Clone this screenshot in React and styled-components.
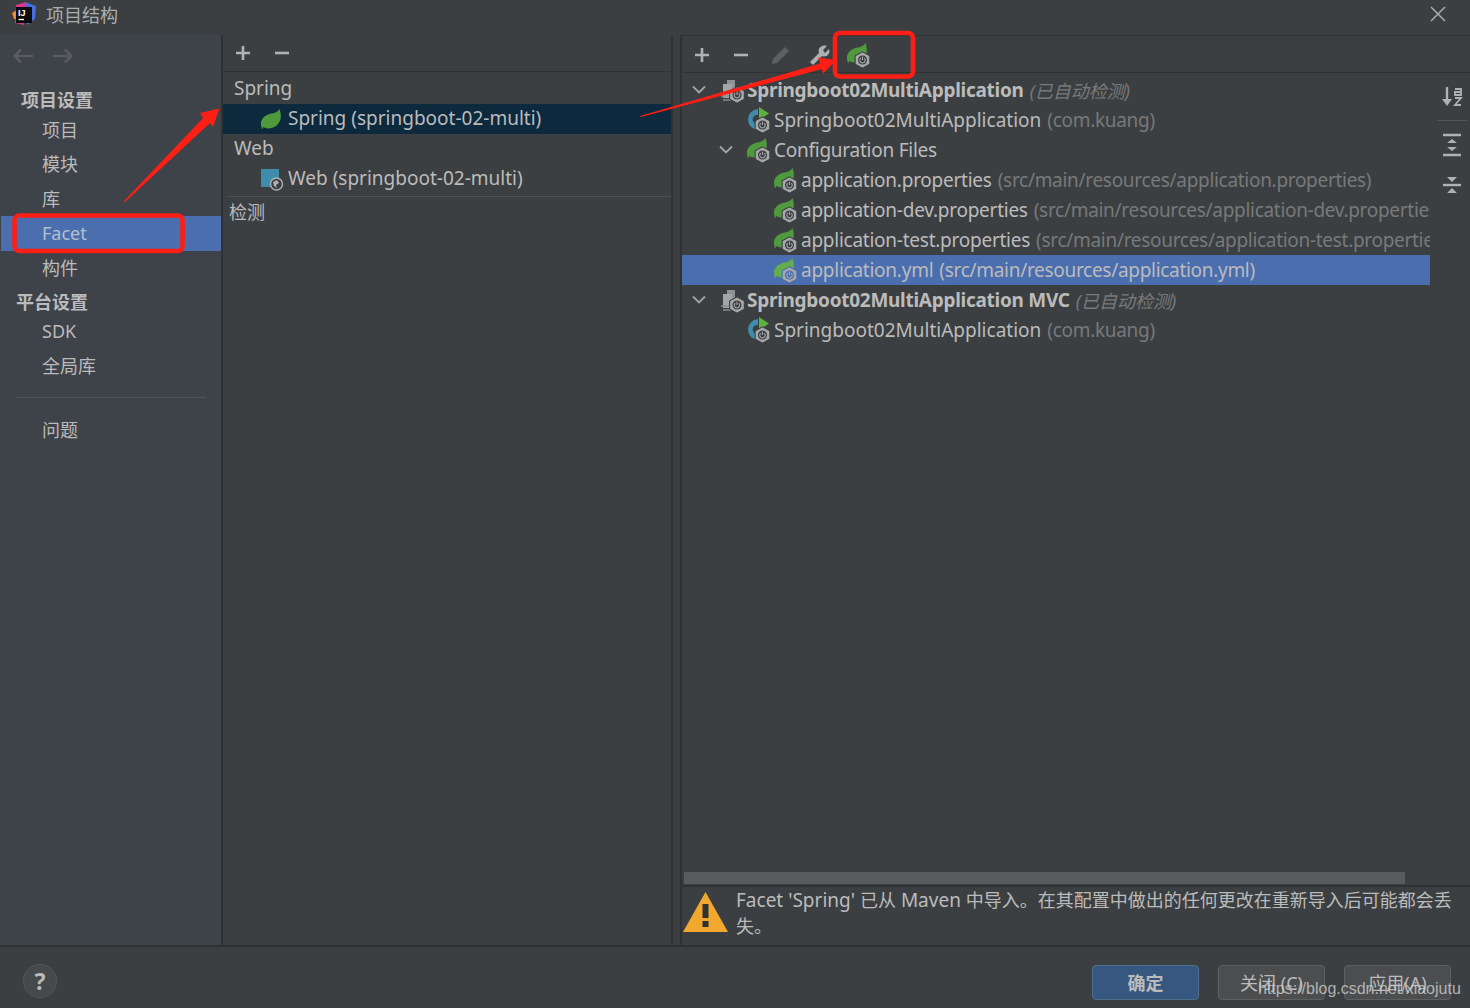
import React from "react";
import styled, { createGlobalStyle } from "styled-components";

const Global = createGlobalStyle`
  html, body { margin: 0; padding: 0; background: #3c3f41; }
  * { box-sizing: border-box; }
`;

const Window = styled.div`
  position: relative;
  width: 1470px;
  height: 1008px;
  overflow: hidden;
  display: flex;
  flex-direction: column;
  background: #3c3f41;
  color: #bbbbbb;
  font-family: "Noto Sans", "Noto Sans CJK SC", sans-serif;
  font-size: 19px;
`;
const TitleBar = styled.div`
  height: 35px;
  flex: none;
  display: flex;
  align-items: center;
  padding: 0 24px 8px 11px;
  gap: 9px;
  font-size: 18px;
  color: #a9adb0;
`;
const TitleText = styled.span`
  flex: 1;
`;
const Body = styled.div`
  flex: 1;
  min-height: 0;
  display: flex;
`;
const Sidebar = styled.nav`
  width: 221px;
  flex: none;
  padding-left: 1px;
  background: #3e4249;
  display: flex;
  flex-direction: column;
`;
const NavBar = styled.div`
  height: 42px;
  display: flex;
  align-items: center;
  gap: 18px;
  padding-left: 11px;
`;
const SideHead = styled.div`
  height: ${p => p.$h}px;
  margin-top: ${p => p.$mt || 0}px;
  padding-left: ${p => p.$x}px;
  padding-top: 2px;
  display: flex;
  align-items: center;
  font-weight: 700;
  font-size: 18px;
  color: #bbbbbb;
`;
const SideItem = styled.div`
  height: 34.5px;
  padding-left: 41px;
  padding-bottom: ${p => (p.$latin ? 0 : 2)}px;
  display: flex;
  align-items: center;
  font-size: 18px;
  color: ${p => (p.$active ? "#b4bfd0" : "#bbbbbb")};
  background: ${p => (p.$active ? "#4b6eaf" : "transparent")};
`;
const SideRule = styled.div`
  height: 1px;
  margin: 14px 15px 15px 14px;
  background: #50535a;
`;
const Splitter = styled.div`
  width: 2px;
  flex: none;
  background: #2f3132;
`;
const MidPanel = styled.section`
  width: 448px;
  flex: none;
  display: flex;
  flex-direction: column;
`;
const Toolbar = styled.div`
  height: ${p => p.$h}px;
  flex: none;
  display: flex;
  align-items: center;
  gap: 23px;
  padding-left: ${p => p.$x}px;
  padding-top: ${p => p.$pt || 0}px;
  border-bottom: 1px solid #323232;
`;
const MidList = styled.div`
  padding-top: 2px;
  display: flex;
  flex-direction: column;
`;
const MidRow = styled.div`
  height: 30px;
  display: flex;
  align-items: center;
  gap: 4px;
  padding-left: ${p => p.$x}px;
  padding-bottom: 2px;
  background: ${p => (p.$selected ? "#0d293e" : "transparent")};
`;
const MidIcon = styled.svg`
  flex: none;
  margin-top: 2px;
`;
const MidRule = styled.div`
  height: 1px;
  margin: 2px 0 0 5px;
  background: #515151;
`;
const InspectRow = styled.div`
  height: 30px;
  padding: 0 0 2px 6px;
  display: flex;
  align-items: center;
  font-size: 18px;
`;
const Gap = styled.div`
  width: 9px;
  flex: none;
  border-left: 2px solid #2f3132;
  background: #3c3f41;
`;
const RightPanel = styled.section`
  flex: 1;
  min-width: 0;
  display: flex;
  flex-direction: column;
  border-left: 2px solid #2f3132;
`;
const RightTop = styled.div`
  border-top: 1px solid #323232;
  flex: none;
`;
const TreeArea = styled.div`
  flex: 1;
  min-height: 0;
  display: flex;
  flex-direction: column;
  border-bottom: 2px solid #2f3132;
`;
const TreeMain = styled.div`
  flex: 1;
  min-height: 0;
  display: flex;
`;
const Tree = styled.div`
  width: 748px;
  flex: none;
  overflow: hidden;
  padding-top: 2px;
`;
const TreeRow = styled.div`
  height: 30px;
  display: flex;
  align-items: center;
  white-space: nowrap;
  padding-left: ${p => p.$x}px;
  background: ${p => (p.$selected ? "#4b6eaf" : "transparent")};
`;
const Chevron = styled.svg`
  width: 16px;
  height: 16px;
  flex: none;
  margin-right: 12px;
`;
const NodeIcon = styled.svg`
  width: 26px;
  height: 26px;
  flex: none;
  margin-right: 2px;
`;
const Bold = styled.b`
  font-weight: 700;
  letter-spacing: -0.28px;
`;
const FileName = styled.span`
  letter-spacing: -0.25px;
`;
const Hint = styled.span`
  margin-left: 6px;
  letter-spacing: -0.3px;
  color: ${p => (p.$onSel ? "#bbbbbb" : "#77797b")};
`;
const AutoHint = styled.span`
  margin-left: 6px;
  color: #77797b;
  font-style: italic;
  font-size: 18px;
`;
const Cjk = styled.span`
  font-size: 18px;
`;
const SideTools = styled.div`
  flex: 1;
  display: flex;
  flex-direction: column;
  align-items: center;
  padding: 13px 0 0 3px;
`;
const ToolRule = styled.div`
  width: 30px;
  height: 1px;
  margin: 12px 0;
  background: #555759;
`;
const CollapseIcon = styled.svg`
  margin-top: 18px;
`;
const ScrollTrack = styled.div`
  height: 14px;
  flex: none;
  padding: 0 65px 0 2px;
  display: flex;
  align-items: center;
`;
const ScrollThumb = styled.div`
  height: 12px;
  width: 100%;
  background: #595b5d;
`;
const Warning = styled.div`
  height: 58px;
  flex: none;
  display: flex;
  gap: 8px;
  padding: 0 10px 0 1px;
`;
const WarnIcon = styled.svg`
  width: 45px;
  height: 42px;
  flex: none;
  margin-top: 4px;
`;
const WarnText = styled.div`
  line-height: 26px;
  flex: 1;
`;
const Footer = styled.footer`
  height: 63px;
  flex: none;
  border-top: 2px solid #2f3132;
  display: flex;
  align-items: flex-start;
  padding: 17px 19px 0 23px;
  gap: 19px;
`;
const Help = styled.div`
  width: 34px;
  height: 34px;
  border-radius: 50%;
  border: 1px solid #555;
  background: #46494b;
  display: flex;
  align-items: center;
  justify-content: center;
  font-weight: 700;
  font-size: 23px;
  margin-right: auto;
`;
const Btn = styled.button`
  width: 107px;
  height: 35px;
  margin-top: 1px;
  border-radius: 4px;
  border: 1px solid ${p => (p.$primary ? "#4c708c" : "#5e6060")};
  background: ${p => (p.$primary ? "#365880" : "#4b4d4f")};
  color: #bbbbbb;
  font: inherit;
  font-size: 18px;
  font-weight: ${p => (p.$primary ? 700 : 400)};
  padding: 0 0 2px;
`;
const Watermark = styled.div`
  position: absolute;
  left: 1258px;
  top: 979px;
  font-family: "Liberation Sans", sans-serif;
  font-size: 16px;
  line-height: 20px;
  color: rgba(205, 205, 205, 0.82);
`;
const Marks = styled.svg`
  position: absolute;
  left: 0;
  top: 0;
  pointer-events: none;
`;
const ToolGlyph = styled.svg`
  flex: none;
  margin-left: ${p => p.$ml || 0}px;
`;

const Gear = ({ x, y, s = 1.08, bg = "#3c3f41" }) => (
  <g transform={`translate(${x} ${y}) scale(${s})`}>
    <path d="M0 -7.500 L6.800 -3.800 V3.800 L0 7.500 L-6.800 3.800 V-3.800 Z" fill="#a6a8aa" stroke={bg} strokeWidth="1" />
    <circle r="4.200" fill={bg} />
    <path d="M-1.700 -1.700 A2.500 2.500 0 1 0 1.700 -1.700" fill="none" stroke="#a6a8aa" strokeWidth="1" />
    <path d="M0 -3.200 V0" stroke="#a6a8aa" strokeWidth="1" />
  </g>
);
const LeafPath = "M1 16 C0 9 7 5 12 4.500 C15 4 18 2.500 19.500 0 C22 7 21 13 16 17 C12 20 6 20 3.500 18 L2 20.500 Z";
const Leaf = ({ color = "#57a03f" }) => <path d={LeafPath} fill={color} />;

const BootLeafIcon = ({ light }) => (
  <NodeIcon viewBox="0 0 26 26">
    <g transform="translate(0 1)"><Leaf color={light ? "#62ad4c" : "#4f9a3c"} /></g>
    <Gear x={16.5} y={18} bg={light ? "#4b6eaf" : "#3c3f41"} />
  </NodeIcon>
);
const AppIcon = () => (
  <NodeIcon viewBox="0 0 26 26">
    <path d="M12 2 A10.500 10.500 0 1 0 13 23 L13 16.500 A4.500 4.500 0 1 1 12 8 Z" fill="#3f8dab" />
    <path d="M13 0 L23 6.500 L13 13 Z" fill="#5cb23f" />
    <Gear x={16.5} y={18} />
  </NodeIcon>
);
const ModuleIcon = () => (
  <NodeIcon viewBox="0 0 26 26">
    <rect x="8" y="3" width="8" height="15" fill="#8f9193" />
    <rect x="4" y="7" width="9" height="14" fill="#a3a5a7" />
    <path d="M2 19 H10 M4 23 H12" stroke="#8a8c8e" strokeWidth="1.500" />
    <Gear x={18} y={18} />
  </NodeIcon>
);
const Down = () => (
  <Chevron viewBox="0 0 16 16"><path d="M2 4.500 L8 10.500 L14 4.500" fill="none" stroke="#a3a5a7" strokeWidth="1.800" /></Chevron>
);

const PlusIcon = () => (
  <ToolGlyph width="16" height="16" viewBox="0 0 16 16"><path d="M8 1 V15 M1 8 H15" stroke="#b0b2b4" strokeWidth="2.600" /></ToolGlyph>
);
const MinusIcon = () => (
  <ToolGlyph width="16" height="16" viewBox="0 0 16 16"><path d="M1 8 H15" stroke="#b0b2b4" strokeWidth="2.600" /></ToolGlyph>
);
const ArrowNav = ({ right }) => (
  <svg width="22" height="16" viewBox="0 0 22 16">
    <g transform={right ? "translate(22 0) scale(-1 1)" : undefined}>
      <path d="M9 1.500 L2.500 8 L9 14.500 M3 8 H21" fill="none" stroke="#595b5e" strokeWidth="2.600" />
    </g>
  </svg>
);

const Row = ({ x, selected, chevron, icon, children }) => (
  <TreeRow $x={x} $selected={selected}>
    {chevron && <Down />}
    {icon}
    {children}
  </TreeRow>
);

export default function App() {
  return (
    <Window>
      <Global />
      <TitleBar>
        <svg width="26" height="26" viewBox="0 0 26 26">
          <path d="M5 4 L15 1 L13 24 L4 22 Z" fill="#e0358c" />
          <path d="M14 1 L25 5 L24 18 L16 24 Z" fill="#4a6ee0" />
          <path d="M1 12 L6 9 L6 18 L3 18 Z" fill="#f08a2c" />
          <rect x="5" y="6" width="16" height="16" fill="#0c0c0f" />
          <text x="7" y="14.500" fontSize="9" fontWeight="700" fontFamily="Liberation Sans, sans-serif" fill="#fff">IJ</text>
          <path d="M7.500 18.500 H13" stroke="#fff" strokeWidth="1.300" />
        </svg>
        <TitleText>项目结构</TitleText>
        <svg width="16" height="16" viewBox="0 0 16 16"><path d="M1 1 L15 15 M15 1 L1 15" stroke="#a9abad" strokeWidth="1.500" /></svg>
      </TitleBar>
      <Body>
        <Sidebar>
          <NavBar>
            <ArrowNav />
            <ArrowNav right />
          </NavBar>
          <SideHead $h={29.5} $mt={6} $x={20}>项目设置</SideHead>
          <SideItem>项目</SideItem>
          <SideItem>模块</SideItem>
          <SideItem>库</SideItem>
          <SideItem $active $latin>Facet</SideItem>
          <SideItem>构件</SideItem>
          <SideHead $h={29} $x={15}>平台设置</SideHead>
          <SideItem $latin>SDK</SideItem>
          <SideItem>全局库</SideItem>
          <SideRule />
          <SideItem>问题</SideItem>
        </Sidebar>
        <Splitter />
        <MidPanel>
          <Toolbar $h={37} $x={12}>
            <PlusIcon />
            <MinusIcon />
          </Toolbar>
          <MidList>
            <MidRow $x={11}>Spring</MidRow>
            <MidRow $x={37} $selected>
              <MidIcon width="24" height="21" viewBox="0 0 24 21"><Leaf color="#4f9a3c" /></MidIcon>
              Spring (springboot-02-multi)
            </MidRow>
            <MidRow $x={11}>Web</MidRow>
            <MidRow $x={38}>
              <MidIcon width="23" height="24" viewBox="0 0 23 24">
                <rect x="0" y="2" width="18" height="18" fill="#3f8dab" />
                <circle cx="15.500" cy="17" r="6" fill="#3c3f41" stroke="#aeb0b2" strokeWidth="1.400" />
                <path d="M12 15 L16 13 L18 16 L15 18 L16 21 L13 19 Z" fill="#aeb0b2" />
              </MidIcon>
              Web (springboot-02-multi)
            </MidRow>
            <MidRule />
            <InspectRow>检测</InspectRow>
          </MidList>
        </MidPanel>
        <Gap />
        <RightPanel>
          <RightTop>
            <Toolbar $h={37} $x={12} $pt={2}>
              <PlusIcon />
              <MinusIcon />
              <ToolGlyph $ml={-2} width="22" height="22" viewBox="0 0 22 22"><path d="M2 20 L3 15 L15 3 L19 7 L7 19 Z" fill="#5d5f61" /></ToolGlyph>
              <ToolGlyph $ml={-6} width="22" height="22" viewBox="0 0 22 22"><path d="M1 18 L10 9 C8.500 5 12 0 18 2 L14 6 L16 9 L20 5 C22 10 17 14 13 12 L4 21 Z" fill="#adafb1" /></ToolGlyph>
              <ToolGlyph $ml={-8} width="26" height="26" viewBox="0 0 26 26">
                <g transform="translate(0 1)"><Leaf color="#4f9a3c" /></g>
                <Gear x={16.5} y={18} />
              </ToolGlyph>
            </Toolbar>
          </RightTop>
          <TreeArea>
            <TreeMain>
              <Tree>
                <Row x={9} chevron icon={<ModuleIcon />}><Bold>Springboot02MultiApplication</Bold><AutoHint>(已自动检测)</AutoHint></Row>
                <Row x={64} icon={<AppIcon />}>Springboot02MultiApplication<Hint>(com.kuang)</Hint></Row>
                <Row x={36} chevron icon={<BootLeafIcon />}><FileName>Configuration Files</FileName></Row>
                <Row x={91} icon={<BootLeafIcon />}><FileName>application.properties</FileName><Hint>(src/main/resources/application.properties)</Hint></Row>
                <Row x={91} icon={<BootLeafIcon />}><FileName>application-dev.properties</FileName><Hint>(src/main/resources/application-dev.properties)</Hint></Row>
                <Row x={91} icon={<BootLeafIcon />}><FileName>application-test.properties</FileName><Hint>(src/main/resources/application-test.properties)</Hint></Row>
                <Row x={91} selected icon={<BootLeafIcon light />}><FileName>application.yml</FileName><Hint $onSel>(src/main/resources/application.yml)</Hint></Row>
                <Row x={9} chevron icon={<ModuleIcon />}><Bold>Springboot02MultiApplication MVC</Bold><AutoHint>(已自动检测)</AutoHint></Row>
                <Row x={64} icon={<AppIcon />}>Springboot02MultiApplication<Hint>(com.kuang)</Hint></Row>
              </Tree>
              <SideTools>
                <svg width="22" height="22" viewBox="0 0 22 22">
                  <path d="M6 1 V16" stroke="#afb1b3" strokeWidth="2.400" />
                  <path d="M1 13 H11 L6 20 Z" fill="#afb1b3" />
                  <path d="M14 3 H20 V9 H14 V6 H20 M14 12 H20 L14 19 H20" fill="none" stroke="#afb1b3" strokeWidth="1.800" />
                </svg>
                <ToolRule />
                <svg width="20" height="24" viewBox="0 0 20 24">
                  <path d="M1 2 H19 M1 22 H19" stroke="#afb1b3" strokeWidth="2.400" />
                  <path d="M10 6 L15 10 H5 Z M10 18 L15 14 H5 Z" fill="#afb1b3" />
                </svg>
                <CollapseIcon width="20" height="20" viewBox="0 0 20 20">
                  <path d="M1 10 H19" stroke="#afb1b3" strokeWidth="2.400" />
                  <path d="M5 2 H15 L10 7 Z M5 18 H15 L10 13 Z" fill="#afb1b3" />
                </CollapseIcon>
              </SideTools>
            </TreeMain>
            <ScrollTrack><ScrollThumb /></ScrollTrack>
          </TreeArea>
          <Warning>
            <WarnIcon viewBox="0 0 45 42">
              <path d="M22.500 1 L45 41 H0 Z" fill="#f2a82f" />
              <rect x="19.500" y="13" width="6" height="14" fill="#2f3132" />
              <rect x="19.500" y="30" width="6" height="6" fill="#2f3132" />
            </WarnIcon>
            <WarnText>Facet 'Spring' <Cjk>已从</Cjk> Maven <Cjk>中导入。在其配置中做出的任何更改在重新导入后可能都会丢失。</Cjk></WarnText>
          </Warning>
        </RightPanel>
      </Body>
      <Footer>
        <Help>?</Help>
        <Btn $primary>确定</Btn>
        <Btn>关闭 (C)</Btn>
        <Btn>应用(A)</Btn>
      </Footer>
      <Watermark>https://blog.csdn.net/xiaojutu</Watermark>
      <Marks width="1470" height="1008" viewBox="0 0 1470 1008">
        <rect x="14.500" y="215.500" width="168" height="35.500" rx="5" fill="none" stroke="#fb1f15" strokeWidth="4.600" />
        <rect x="835" y="33" width="78" height="43.500" rx="5" fill="none" stroke="#fb1f15" strokeWidth="4.600" />
        <path d="M124 201 L203 118 L200 113 L219.500 108.500 L213 127 L210 123 L125 202 Z" fill="#fb1f15" />
        <path d="M640 116 L820 63.500 L818 57.500 L836 60 L823 74 L822 69 L641 117 Z" fill="#fb1f15" />
      </Marks>
    </Window>
  );
}
